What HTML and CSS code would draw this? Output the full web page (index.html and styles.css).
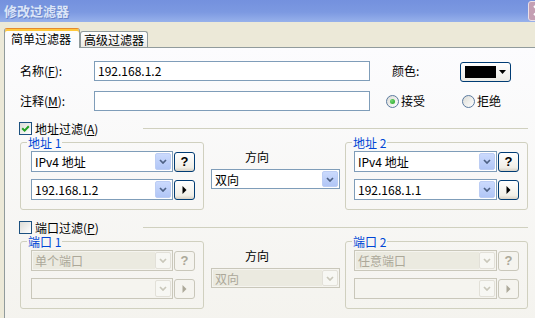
FILE: index.html
```html
<!DOCTYPE html>
<html lang="zh-CN">
<head>
  <meta charset="UTF-8" />
  <title>修改过滤器</title>
  <link rel="stylesheet" href="styles.css">
</head>
<body>
  <div class="titlebar">
    <span class="title">修改过滤器</span>
    <span class="close">
      <svg width="19" height="18" viewBox="0 0 19 18"><path d="M5 4l9 9M14 4l-9 9" stroke="#fff" stroke-width="2"/></svg>
    </span>
  </div>

  <div class="tabs">
    <div class="tab active">简单过滤器</div>
    <div class="tab">高级过滤器</div>
  </div>

  <div class="panel">
    <div class="row">
      <label class="lbl">名称(<u>F</u>):</label>
      <div class="field">192.168.1.2</div>
      <span class="color-lbl">颜色:</span>
      <div class="color-pick">
        <span class="swatch"></span>
        <svg width="7" height="4" viewBox="0 0 7 4"><path d="M0 0h7L3.5 4z"/></svg>
      </div>
    </div>

    <div class="row">
      <label class="lbl">注释(<u>M</u>):</label>
      <div class="field"></div>
      <span class="radio first"><span class="knob"><span class="dot"></span></span>接受</span>
      <span class="radio"><span class="knob"></span>拒绝</span>
    </div>

    <!-- address filter -->
    <section class="filter">
      <div class="filter-head">
        <span class="check">
          <svg width="11" height="11" viewBox="0 0 11 11"><path d="M2.2 5.2l2.4 2.4L8.8 3.2" fill="none" stroke="#21a121" stroke-width="2"/></svg>
        </span>
        <span class="head-lbl">地址过滤(<u>A</u>)</span>
        <span class="rule"></span>
      </div>
      <div class="filter-body">
        <fieldset class="grp">
          <legend>地址 1</legend>
          <div class="grp-body">
            <div class="line">
              <div class="combo"><span class="val">IPv4 地址</span><span class="drop"><svg width="8" height="5" viewBox="0 0 8 5"><path d="M1 1l3 3 3-3" fill="none" stroke-width="1.7"/></svg></span></div>
              <button class="btn">?</button>
            </div>
            <div class="line">
              <div class="combo"><span class="val">192.168.1.2</span><span class="drop"><svg width="8" height="5" viewBox="0 0 8 5"><path d="M1 1l3 3 3-3" fill="none" stroke-width="1.7"/></svg></span></div>
              <button class="btn"><svg width="5" height="8" viewBox="0 0 5 8"><path d="M0.5 0L4.5 4L0.5 8z"/></svg></button>
            </div>
          </div>
        </fieldset>

        <div class="dir">
          <span class="dir-lbl">方向</span>
          <div class="combo wide"><span class="val">双向</span><span class="drop"><svg width="8" height="5" viewBox="0 0 8 5"><path d="M1 1l3 3 3-3" fill="none" stroke-width="1.7"/></svg></span></div>
        </div>

        <fieldset class="grp right">
          <legend>地址 2</legend>
          <div class="grp-body">
            <div class="line">
              <div class="combo"><span class="val">IPv4 地址</span><span class="drop"><svg width="8" height="5" viewBox="0 0 8 5"><path d="M1 1l3 3 3-3" fill="none" stroke-width="1.7"/></svg></span></div>
              <button class="btn">?</button>
            </div>
            <div class="line">
              <div class="combo"><span class="val">192.168.1.1</span><span class="drop"><svg width="8" height="5" viewBox="0 0 8 5"><path d="M1 1l3 3 3-3" fill="none" stroke-width="1.7"/></svg></span></div>
              <button class="btn"><svg width="5" height="8" viewBox="0 0 5 8"><path d="M0.5 0L4.5 4L0.5 8z"/></svg></button>
            </div>
          </div>
        </fieldset>
      </div>
    </section>

    <!-- port filter (disabled) -->
    <section class="filter off">
      <div class="filter-head">
        <span class="check"></span>
        <span class="head-lbl">端口过滤(<u>P</u>)</span>
        <span class="rule"></span>
      </div>
      <div class="filter-body">
        <fieldset class="grp">
          <legend>端口 1</legend>
          <div class="grp-body">
            <div class="line">
              <div class="combo list"><span class="val">单个端口</span><span class="drop"><svg width="8" height="5" viewBox="0 0 8 5"><path d="M1 1l3 3 3-3" fill="none" stroke-width="1.7"/></svg></span></div>
              <button class="btn">?</button>
            </div>
            <div class="line">
              <div class="combo"><span class="val"></span><span class="drop"><svg width="8" height="5" viewBox="0 0 8 5"><path d="M1 1l3 3 3-3" fill="none" stroke-width="1.7"/></svg></span></div>
              <button class="btn"><svg width="5" height="8" viewBox="0 0 5 8"><path d="M0.5 0L4.5 4L0.5 8z"/></svg></button>
            </div>
          </div>
        </fieldset>

        <div class="dir">
          <span class="dir-lbl">方向</span>
          <div class="combo wide list"><span class="val">双向</span><span class="drop"><svg width="8" height="5" viewBox="0 0 8 5"><path d="M1 1l3 3 3-3" fill="none" stroke-width="1.7"/></svg></span></div>
        </div>

        <fieldset class="grp right">
          <legend>端口 2</legend>
          <div class="grp-body">
            <div class="line">
              <div class="combo list"><span class="val">任意端口</span><span class="drop"><svg width="8" height="5" viewBox="0 0 8 5"><path d="M1 1l3 3 3-3" fill="none" stroke-width="1.7"/></svg></span></div>
              <button class="btn">?</button>
            </div>
            <div class="line">
              <div class="combo"><span class="val"></span><span class="drop"><svg width="8" height="5" viewBox="0 0 8 5"><path d="M1 1l3 3 3-3" fill="none" stroke-width="1.7"/></svg></span></div>
              <button class="btn"><svg width="5" height="8" viewBox="0 0 5 8"><path d="M0.5 0L4.5 4L0.5 8z"/></svg></button>
            </div>
          </div>
        </fieldset>
      </div>
    </section>
  </div>
</body>
</html>
```

FILE: styles.css
```css
:root {
  --face: #ece9d8;
  --tab-line: #919b9c;
  --edit-line: #7f9db9;
  --group-line: #d0d0bf;
  --btn-line: #003c74;
  --dis-line: #c9c7ba;
  --dis-text: #aca899;
  --legend: #0046d5;
  --green: #21a121;
}

* {
  box-sizing: border-box;
}

html, body {
  margin: 0;
  overflow: hidden;
}

body {
  width: 535px;
  height: 318px;
  background: var(--face);
  font: 12px/14px "Noto Sans CJK SC", "Noto Sans", sans-serif;
  color: #000;
}

u {
  text-decoration-thickness: 1px;
  text-underline-offset: 1px;
}

/* title bar */
.titlebar {
  display: flex;
  align-items: flex-start;
  height: 22px;
  background: linear-gradient(#7491de, #7c99e1 55%, #97b1eb);
}

.title {
  margin: 4px 0 0 4px;
  color: #dbe5f8;
  font-weight: bold;
  font-size: 13px;
  line-height: 14px;
  text-shadow: 1px 1px 0 #6a84c8;
}

.close {
  display: flex;
  margin: 1px -14px 0 auto;
  width: 21px;
  height: 20px;
  border: 1px solid #ecdfe7;
  border-radius: 3px;
  background: #c49fb3;
}

/* tabs */
.tabs {
  display: flex;
  align-items: flex-end;
  height: 26px;
  padding-left: 4px;
  margin-bottom: -1px;
  position: relative;
  z-index: 1;
}

.tab {
  width: 68px;
  height: 16px;
  margin-bottom: 1px;
  padding-left: 3px;
  border: 1px solid var(--tab-line);
  border-bottom: none;
  border-radius: 3px 3px 0 0;
  background: linear-gradient(#fff, #ecebe6);
  line-height: 15px;
  white-space: nowrap;
}

.tab.active {
  width: 76px;
  height: 20px;
  margin-bottom: 0;
  padding-left: 6px;
  border-top-color: #e68b2c;
  box-shadow: inset 0 2px 0 #ffc83c;
  background: #fcfcfe;
  line-height: 19px;
}

/* panel */
.panel {
  width: 545px;
  height: 280px;
  margin-left: 4px;
  padding: 13px 0 0 15px;
  border: 1px solid var(--tab-line);
  border-right: none;
  background: linear-gradient(#fcfcfe, #f4f3ee);
}

.row {
  display: flex;
  align-items: center;
  height: 20px;
}

.row + .row {
  margin-top: 10px;
}

.lbl {
  width: 74px;
}

.field {
  width: 276px;
  height: 20px;
  padding-left: 3px;
  border: 1px solid var(--edit-line);
  background: #fff;
  line-height: 18px;
}

.color-lbl {
  width: 68px;
  margin-left: 22px;
}

.color-pick {
  display: flex;
  align-items: center;
  width: 51px;
  height: 20px;
  margin-top: 2px;
  padding-left: 4px;
  border: 1px solid var(--btn-line);
  border-radius: 3px;
  background: linear-gradient(#fff, #ecebe6);
}

.swatch {
  width: 31px;
  height: 12px;
  background: #000;
}

.color-pick svg {
  margin-left: 3px;
}

.radio {
  display: flex;
  align-items: center;
}

.radio.first {
  width: 76px;
  margin-left: 16px;
}

.knob {
  display: flex;
  align-items: center;
  justify-content: center;
  width: 13px;
  height: 13px;
  margin-right: 2px;
  border: 1px solid #5b7aa0;
  border-radius: 50%;
  background: linear-gradient(135deg, #dcdcd6, #fff);
}

.dot {
  width: 5px;
  height: 5px;
  border-radius: 50%;
  background: radial-gradient(circle at 35% 35%, #72d872, var(--green));
}

/* filter sections */
.filter {
  margin-top: 11px;
}

.filter-head {
  display: flex;
  align-items: center;
  height: 13px;
  line-height: 13px;
}

.check {
  display: flex;
  align-items: center;
  justify-content: center;
  width: 13px;
  height: 13px;
  margin-left: -1px;
  border: 1px solid #1c5180;
  background: linear-gradient(135deg, #dcdcd6, #fff);
}

.head-lbl {
  width: 108px;
  margin-left: 3px;
  white-space: nowrap;
}

.rule {
  width: 385px;
  height: 1px;
  background: var(--group-line);
}

.filter-body {
  display: flex;
  align-items: flex-start;
  margin-top: 1px;
}

.grp {
  width: 184px;
  min-width: 0;
  margin: 0;
  padding: 2px 8px 9px 0;
  border: 1px solid var(--group-line);
  border-radius: 3px;
}

.grp.right {
  width: 183px;
  margin-left: 5px;
}

.grp legend {
  margin-left: 6px;
  padding: 0 1px;
  color: var(--legend);
  line-height: 13px;
}

.grp-body {
  padding-left: 10px;
}

.grp.right .grp-body {
  padding-left: 8px;
}

.line {
  display: flex;
  align-items: center;
}

.line + .line {
  margin-top: 7px;
}

.combo {
  display: flex;
  align-items: center;
  width: 142px;
  height: 21px;
  padding: 1px;
  border: 1px solid var(--edit-line);
  background: #fff;
}

.grp.right .combo {
  width: 143px;
}

.combo .val {
  flex: 1;
  height: 100%;
  padding-left: 2px;
  line-height: 17px;
  white-space: nowrap;
  overflow: hidden;
}

.drop {
  display: flex;
  align-items: center;
  justify-content: center;
  width: 16px;
  height: 100%;
  border: 1px solid #bccdf4;
  border-radius: 2px;
  background: linear-gradient(#cbdafd, #b1c6f6);
  stroke: #4d6185;
}

.dir {
  width: 129px;
  margin-left: 7px;
  padding-top: 14px;
}

.dir-lbl {
  display: block;
  padding-left: 34px;
}

.combo.wide {
  width: 129px;
  height: 20px;
  margin-top: 5px;
}

.btn {
  display: flex;
  align-items: center;
  justify-content: center;
  width: 21px;
  height: 20px;
  margin-left: 1px;
  padding: 0;
  border: 1px solid var(--btn-line);
  border-radius: 3px;
  background: linear-gradient(#fff, #f1efe7 80%, #d8d2c6);
  color: #000;
  font: bold 13px/18px "Liberation Sans", sans-serif;
}

/* disabled section */
.off .check {
  background: linear-gradient(135deg, #dcdcd6, #fff);
}

.off .combo {
  border-color: var(--dis-line);
  background: #f5f4ef;
  color: var(--dis-text);
}

.off .combo.list .val {
  background: #ebeae0;
}

.off .drop {
  border-color: #e2e0d8;
  background: #f7f7f3;
  stroke: #c9c7ba;
}

.off .btn {
  border-color: var(--dis-line);
  background: #f5f4ef;
  color: var(--dis-text);
  fill: var(--dis-text);
}
```
